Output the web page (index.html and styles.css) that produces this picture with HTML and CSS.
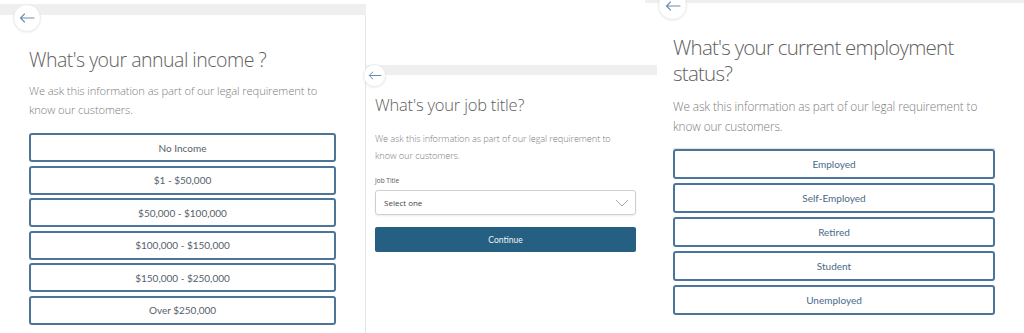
FILE: index.html
```html
<!DOCTYPE html>
<html>
<head>
<meta charset="utf-8">
<link rel="stylesheet" href="styles.css">
</head>
<body>
<div class="page">
  <section class="panel p1">
    <div class="bar"></div>
    <div class="card">
      <button class="back" aria-label="Back">
        <svg width="16" height="10" viewBox="0 0 16 10"><path d="M15 5H1.5M5.5 1L1.5 5l4 4" fill="none" stroke="#6f8eab" stroke-width="1.1" stroke-linecap="round" stroke-linejoin="round"/></svg>
      </button>
      <h1 class="title">What's your annual income ?</h1>
      <p class="sub">We ask this information as part of our legal requirement to know our customers.</p>
      <div class="options">
        <button class="opt">No Income</button>
        <button class="opt">$1 - $50,000</button>
        <button class="opt">$50,000 - $100,000</button>
        <button class="opt">$100,000 - $150,000</button>
        <button class="opt">$150,000 - $250,000</button>
        <button class="opt">Over $250,000</button>
      </div>
    </div>
  </section>

  <section class="panel p2">
    <div class="bar"></div>
    <div class="card">
      <button class="back" aria-label="Back">
        <svg width="14" height="9" viewBox="0 0 14 9"><path d="M13 4.5H1.2M4.8 1L1.2 4.5l3.6 3.5" fill="none" stroke="#6f8eab" stroke-width="1" stroke-linecap="round" stroke-linejoin="round"/></svg>
      </button>
      <h1 class="title">What's your job title?</h1>
      <p class="sub">We ask this information as part of our legal requirement to know our customers.</p>
      <label class="label">Job Title</label>
      <div class="select">
        <span>Select one</span>
        <svg width="14" height="8" viewBox="0 0 14 8"><path d="M1 1l6 6 6-6" fill="none" stroke="#a9a9a9" stroke-width="1"/></svg>
      </div>
      <button class="continue">Continue</button>
    </div>
  </section>

  <section class="panel p3">
    <div class="bar"></div>
    <div class="card">
      <button class="back" aria-label="Back">
        <svg width="16" height="10" viewBox="0 0 16 10"><path d="M15 5H1.5M5.5 1L1.5 5l4 4" fill="none" stroke="#6f8eab" stroke-width="1.1" stroke-linecap="round" stroke-linejoin="round"/></svg>
      </button>
      <h1 class="title">What's your current employment status?</h1>
      <p class="sub">We ask this information as part of our legal requirement to know our customers.</p>
      <div class="rule"></div>
      <div class="options">
        <button class="opt">Employed</button>
        <button class="opt">Self-Employed</button>
        <button class="opt">Retired</button>
        <button class="opt">Student</button>
        <button class="opt">Unemployed</button>
      </div>
    </div>
  </section>
</div>
</body>
</html>
```

FILE: styles.css
```css
* { box-sizing: border-box; }
html, body { margin: 0; padding: 0; background: #fff; }
body { width: 1024px; height: 333px; overflow: hidden; font-family: "Open Sans", "Liberation Sans", sans-serif; }
.page { display: flex; align-items: flex-start; height: 333px; }
.panel { display: flex; flex-direction: column; height: 333px; }
.bar { background: #efefef; flex: none; }
.card { position: relative; flex: 1; }
.title { margin: 0; font-weight: 300; color: #606060; }
.sub { margin: 0; font-weight: 300; color: #7d7d7d; }
.back {
  position: absolute; border-radius: 50%; background: #fff; border: 1px solid #ececec;
  box-shadow: 0 1px 2px rgba(0,0,0,0.06); padding: 0;
  display: flex; align-items: center; justify-content: center;
}
.opt {
  display: block; width: 100%; background: #fff; border: 2px solid #4d7597; border-radius: 3px;
  font-family: Lato, "Open Sans", sans-serif; color: #56616b; padding: 0; text-align: center;
}
.options { display: flex; flex-direction: column; }

/* panel 1 */
.p1 { width: 366px; padding-top: 4px; }
.p1 .bar { height: 11px; }
.p1 .card { border-right: 1px solid #dfe7ee; padding: 32px 29px 0 29px; }
.p1 .back { width: 28px; height: 28px; left: 13px; top: -11px; }
.p1 .title { font-size: 19.5px; line-height: 26px; letter-spacing: -0.5px; }
.p1 .sub { font-size: 11.2px; line-height: 19px; margin-top: 8px; width: 312px; letter-spacing: -0.1px; }
.p1 .options { margin-top: 14px; gap: 3.5px; }
.p1 .opt { height: 29px; font-size: 10px; }

/* panel 2 */
.p2 { width: 291px; padding-top: 65px; }
.p2 .bar { height: 10px; }
.p2 .card { padding: 19px 21px 0 9px; }
.p2 .back { width: 23px; height: 23px; left: -3px; top: -11px; }
.p2 .title { font-size: 16.5px; line-height: 22px; letter-spacing: -0.2px; }
.p2 .sub { font-size: 9.2px; line-height: 16.5px; margin-top: 15px; width: 258px; letter-spacing: -0.1px; }
.p2 .label { display: block; font-size: 6.5px; color: #555; margin-top: 12px; line-height: 10px; font-weight: 400; }
.p2 .select {
  margin-top: 4px; height: 25px; border: 1px solid #cfcfcf; border-radius: 3px;
  box-shadow: 0 1px 2px rgba(0,0,0,0.08);
  display: flex; align-items: center; justify-content: space-between; padding: 0 6px 0 8px;
  font-size: 8px; color: #444;
}
.p2 .continue {
  display: block; width: 100%; margin-top: 12px; height: 25px; border: none; border-radius: 2px;
  background: #255f81; color: #eef3f7; font-family: Lato, "Open Sans", sans-serif; font-size: 8.5px;
}

/* panel 3 */
.p3 { width: 367px; padding-top: 0; }
.p3 .bar { height: 3px; margin-left: -12px; }
.p3 .card { padding: 31px 29px 0 16px; }
.p3 .back { width: 29px; height: 29px; left: 1px; top: -12px; }
.p3 .title { font-size: 20.5px; line-height: 26px; width: 322px; letter-spacing: -0.75px; }
.p3 .sub { font-size: 11.8px; line-height: 20px; margin-top: 10px; width: 330px; letter-spacing: -0.1px; }
.p3 .rule { height: 1px; background: #e3e3e3; margin-top: 12px; }
.p3 .options { gap: 4px; }
.p3 .opt { height: 30px; font-size: 10px; color: #4a6a86; }
```
